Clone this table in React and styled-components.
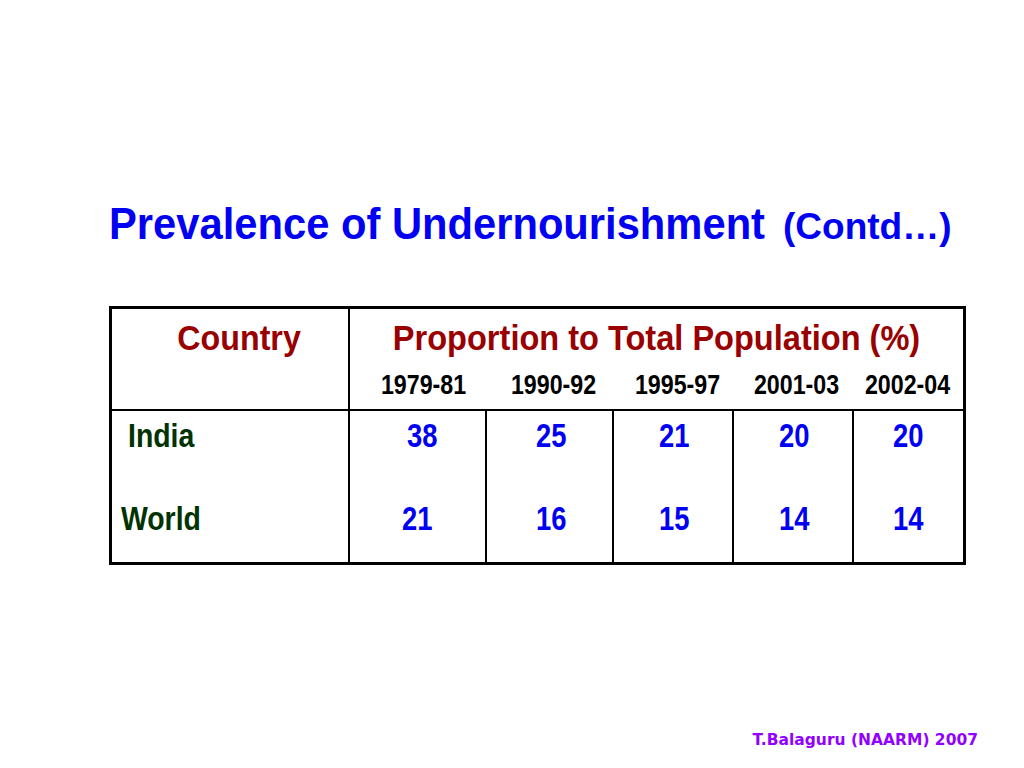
import styled, { createGlobalStyle } from 'styled-components';

const GlobalStyle = createGlobalStyle`
  html, body {
    margin: 0;
    padding: 0;
    background: #ffffff;
  }
`;

// no narrow face installed, so condensed text is squeezed with scaleX
const Squeeze = styled('span')`
  display: inline-block;
  white-space: nowrap;
  transform: scaleX(${(p) => p.sx || 1});
  transform-origin: ${(p) => p.origin || 'center'};
`;

const Slide = styled('div')`
  width: 1024px;
  height: 768px;
  display: flex;
  flex-direction: column;
  box-sizing: border-box;
  padding: 196px 58px 0 109px;
  font-family: "Liberation Sans", Arial, sans-serif;
  font-weight: bold;
`;

const Title = styled('h1')`
  margin: 0;
  display: flex;
  align-items: baseline;
  gap: 18px;
  line-height: 56px;
  font-weight: bold;
  color: #0000f2;
`;

const TitleMain = styled('span')`
  width: 656px;
  font-size: 45px;
`;

const TitleNote = styled('span')`
  font-size: 37px;
`;

const Table = styled('table')`
  margin-top: 51px;
  width: 854px;
  border-collapse: collapse;
  table-layout: fixed;
  border: 3px solid #000;
`;

const Head = styled('th')`
  color: ${(p) => p.color || '#990000'};
  font-size: ${(p) => p.size || 35}px;
  line-height: ${(p) => p.lh || 40}px;
  font-weight: bold;
  text-align: center;
  vertical-align: top;
  padding: ${(p) => p.pad || '0'};
  border-left: ${(p) => (p.line ? '2px solid #000' : 'none')};
`;

const Cell = styled('td')`
  font-size: 33px;
  line-height: 40px;
  color: ${(p) => p.color || '#0000f2'};
  text-align: ${(p) => p.align || 'center'};
  padding: ${(p) => p.pad || '0'};
  border-left: 2px solid #000;
  vertical-align: top;
`;

const HeadRow = styled('tr')`
  border-bottom: ${(p) => (p.last ? '2px solid #000' : 'none')};
`;

const Footer = styled('div')`
  margin-top: auto;
  margin-bottom: 19px;
  margin-right: -12px;
  align-self: flex-end;
  font-family: Verdana, "DejaVu Sans", sans-serif;
  font-size: 15.5px;
  line-height: 18px;
  font-weight: bold;
  color: #9200ff;
`;

const years = [
  { label: '1979-81', shift: 12 },
  { label: '1990-92', shift: 10 },
  { label: '1995-97', shift: 10 },
  { label: '2001-03', shift: 8 },
  { label: '2002-04', shift: 0 },
];
const rows = [
  { name: 'India', left: 16, top: 5, bottom: 0, values: [38, 25, 21, 20, 20], shifts: [10, 4, 4, 4, 0] },
  { name: 'World', left: 9, top: 43, bottom: 23, values: [21, 16, 15, 14, 14], shifts: [0, 4, 4, 4, 0] },
];
const widths = [238, 137, 127, 120, 120, 112];

function App() {
  return (
    <>
      <GlobalStyle />
      <Slide>
        <Title>
          <TitleMain>
            <Squeeze sx={0.927} origin="left">
              Prevalence of Undernourishment
            </Squeeze>
          </TitleMain>
          <TitleNote>
            <Squeeze sx={1} origin="left">
              (Contd…)
            </Squeeze>
          </TitleNote>
        </Title>
        <Table>
          <colgroup>
            {widths.map((w, i) => (
              <col key={i} style={{ width: w }} />
            ))}
          </colgroup>
          <thead>
            <HeadRow>
              <Head rowSpan={2} pad="9px 0 0 18px">
                <Squeeze sx={0.92}>Country</Squeeze>
              </Head>
              <Head colSpan={5} line pad="9px 0 0 0">
                <Squeeze sx={0.93}>Proportion to Total Population (%)</Squeeze>
              </Head>
            </HeadRow>
            <HeadRow last>
              {years.map((y, i) => (
                <Head
                  key={y.label}
                  color="#000"
                  size={27}
                  lh={32}
                  pad={`11px 0 8px ${y.shift}px`}
                  line={i === 0}
                >
                  <Squeeze sx={0.86}>{y.label}</Squeeze>
                </Head>
              ))}
            </HeadRow>
          </thead>
          <tbody>
            {rows.map((r) => (
              <tr key={r.name}>
                <Cell color="#003300" align="left" pad={`${r.top}px 0 ${r.bottom}px ${r.left}px`}>
                  <Squeeze sx={0.86} origin="left">
                    {r.name}
                  </Squeeze>
                </Cell>
                {r.values.map((v, i) => (
                  <Cell key={i} pad={`${r.top}px 0 ${r.bottom}px ${r.shifts[i]}px`}>
                    <Squeeze sx={0.83}>{v}</Squeeze>
                  </Cell>
                ))}
              </tr>
            ))}
          </tbody>
        </Table>
        <Footer>T.Balaguru (NAARM) 2007</Footer>
      </Slide>
    </>
  );
}

export default App;
